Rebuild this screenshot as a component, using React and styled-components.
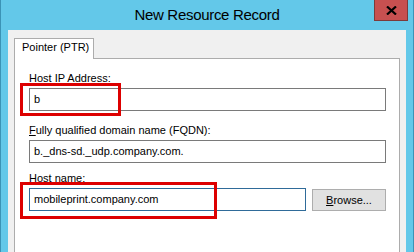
import React from "react";
import styled, { createGlobalStyle } from "styled-components";

const GlobalStyle = createGlobalStyle`
    html, body {
        margin: 0;
        padding: 0;
        overflow: hidden;
        background: #63c8e9;
    }
`

const Window = styled.div`
    position: relative;
    width: 414px;
    height: 252px;
    box-sizing: border-box;
    background-color: #63c8e9;
    border-left: 1px solid #3b93b6;
    border-right: 1px solid #3b93b6;
    font-family: "Liberation Sans", Arial, sans-serif;
    overflow: hidden;
`

const TitleBar = styled.div`
    height: 30px;
    display: grid;
    grid-template-columns: 1fr auto 1fr;
`

const Title = styled.div`
    grid-column: 2;
    font-size: 15px;
    letter-spacing: -0.3px;
    line-height: 30px;
    color: #000;
    padding-top: 0px;
`

const CloseButton = styled.div`
    grid-column: 3;
    justify-self: end;
    align-self: start;
    width: 34px;
    height: 21px;
    margin-right: 5px;
    box-sizing: border-box;
    background-color: #c75050;
    border: 1px solid #7d3a3a;
    border-top: none;
    display: flex;
    align-items: center;
    justify-content: center;
`

const Client = styled.div`
    margin: 0 7px;
    height: 222px;
    background-color: #f0f0f0;
    padding: 8px 6px 0 6px;
    box-sizing: border-box;
    display: flex;
    flex-direction: column;
`

const TabStrip = styled.div`
    display: flex;
    position: relative;
    z-index: 1;
    margin-bottom: -1px;
`

const Tab = styled.div`
    width: 80px;
    height: 21px;
    box-sizing: border-box;
    border: 1px solid #acacac;
    border-bottom: none;
    background-color: #fff;
    padding: 2px 0 0 7px;
    font-size: 11px;
    line-height: 13px;
    color: #000;
`

const Panel = styled.div`
    flex: 1;
    border: 1px solid #acacac;
    border-bottom: none;
    background-color: #fff;
    padding: 13px 13px 0 14px;
    display: flex;
    flex-direction: column;
`

const Label = styled.div`
    font-size: 11px;
    line-height: 13px;
    color: #000;
    margin-top: ${props => props.$gap || 0}px;
    margin-bottom: 3px;
    white-space: nowrap;
`

const Row = styled.div`
    display: flex;
    align-items: flex-end;
    gap: 6px;
`

const TextBox = styled.div`
    width: ${props => props.$width || 357}px;
    height: 23px;
    box-sizing: border-box;
    border: 1px solid ${props => props.$focused ? "#2f6b99" : "#7a7a7a"};
    background-color: #fff;
    padding: 0 4px;
    font-size: 11px;
    line-height: 21px;
    color: #000;
    white-space: nowrap;
    overflow: hidden;
`

const Button = styled.div`
    width: 74px;
    height: 22px;
    box-sizing: border-box;
    border: 1px solid #adadad;
    background-color: #e1e1e1;
    font-size: 11px;
    line-height: 20px;
    text-align: center;
    color: #000;
`

const Highlight = styled.div`
    position: absolute;
    box-sizing: border-box;
    border: 3px solid #dd0000;
    pointer-events: none;
`

const CloseIcon = () => (
    <svg width="11" height="9" viewBox="0 0 11 9">
        <path d="M1 0.5 L10 8.5 M10 0.5 L1 8.5" stroke="#000" strokeWidth="2.2" />
    </svg>
)

const NewResourceRecord = () => (
    <Window>
        <GlobalStyle />
        <TitleBar>
            <Title>New Resource Record</Title>
            <CloseButton><CloseIcon /></CloseButton>
        </TitleBar>
        <Client>
            <TabStrip>
                <Tab>Pointer (PTR)</Tab>
            </TabStrip>
            <Panel>
                <Label>Host IP Address:</Label>
                <TextBox>b</TextBox>
                <Label $gap={13}><u>F</u>ully qualified domain name (FQDN):</Label>
                <TextBox>b._dns-sd._udp.company.com.</TextBox>
                <Label $gap={9}><u>H</u>ost name:</Label>
                <Row>
                    <TextBox $width={277} $focused>mobileprint.company.com</TextBox>
                    <Button><u>B</u>rowse...</Button>
                </Row>
            </Panel>
        </Client>
        <Highlight style={{ left: 19, top: 83, width: 101, height: 33 }} />
        <Highlight style={{ left: 19, top: 182, width: 197, height: 37 }} />
    </Window>
)

export default NewResourceRecord;
